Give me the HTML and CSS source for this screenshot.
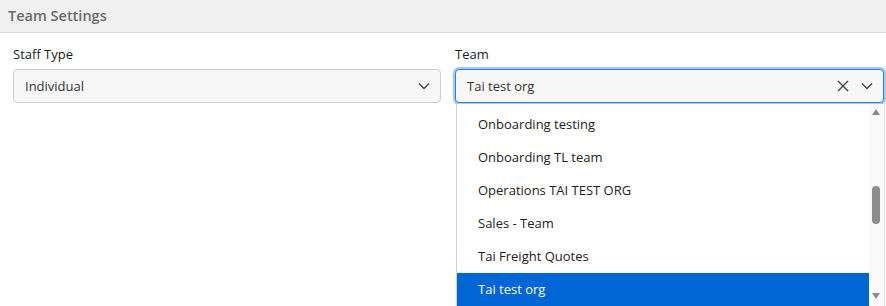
FILE: index.html
```html
<!DOCTYPE html>
<html lang="en">
<head>
    <meta charset="UTF-8">
    <meta name="viewport" content="width=device-width, initial-scale=1.0">
    <title>Team Settings</title>
    <link rel="stylesheet" href="styles.css">
</head>
<body>
    <div class="panel-header">Team Settings</div>
    <div class="form-row">
        <div class="field">
            <label>Staff Type</label>
            <div class="select">
                <span class="select-value">Individual</span>
                <span class="select-icons">
                    <svg class="chevron" width="14" height="14" viewBox="0 0 14 14"><path d="M2 4.5 L7 9.5 L12 4.5" fill="none" stroke="#444" stroke-width="1.4"/></svg>
                </span>
            </div>
        </div>
        <div class="field">
            <label>Team</label>
            <div class="select focused">
                <span class="select-value">Tai test org</span>
                <span class="select-icons">
                    <svg class="clear" width="14" height="14" viewBox="0 0 14 14"><path d="M2 2 L12 12 M12 2 L2 12" fill="none" stroke="#444" stroke-width="1.4"/></svg>
                    <svg class="chevron" width="14" height="14" viewBox="0 0 14 14"><path d="M2 4.5 L7 9.5 L12 4.5" fill="none" stroke="#444" stroke-width="1.4"/></svg>
                </span>
            </div>
            <div class="dropdown">
                <ul class="options">
                    <li>Onboarding testing</li>
                    <li>Onboarding TL team</li>
                    <li>Operations TAI TEST ORG</li>
                    <li>Sales - Team</li>
                    <li>Tai Freight Quotes</li>
                    <li class="selected">Tai test org</li>
                </ul>
                <div class="scrollbar">
                    <span class="arrow-up"></span>
                    <span class="thumb"></span>
                    <span class="arrow-down"></span>
                </div>
            </div>
        </div>
    </div>
</body>
</html>
```

FILE: styles.css
```css
body {
    margin: 0;
    font-family: "Open Sans", "Noto Sans", sans-serif;
    font-size: 13px;
    color: #222;
    background: #fff;
    height: 306px;
    overflow: hidden;
}
.panel-header {
    height: 33px;
    line-height: 32px;
    padding-left: 8px;
    background: #f0f0f0;
    border-bottom: 1px solid #dcdcdc;
    box-sizing: border-box;
    font-size: 14.5px;
    font-weight: 600;
    color: #6b6b6b;
}
.form-row {
    display: grid;
    grid-template-columns: 428px 429px;
    column-gap: 14px;
    padding: 13px 0 0 13px;
}
.field {
    position: relative;
}
.field label {
    display: block;
    height: 23px;
    line-height: 17px;
    color: #222;
}
.select {
    display: flex;
    align-items: center;
    height: 34px;
    box-sizing: border-box;
    border: 1px solid #cfcfcf;
    border-radius: 4px;
    background: #f7f7f7;
    padding: 0 9px 0 11px;
}
.select.focused {
    border-color: #2b7de9;
    box-shadow: 0 0 0 2px #a7c9f5;
}
.select-value {
    flex: 1;
    color: #333;
}
.select-icons {
    display: flex;
    gap: 10px;
}
.select-icons svg {
    display: block;
}
.dropdown {
    position: absolute;
    top: 58px;
    left: 1px;
    right: -1px;
    height: 210px;
    display: flex;
    background: #fff;
    border-left: 1px solid #d0d0d0;
    border-right: 1px solid #e2e2e2;
}
.options {
    list-style: none;
    margin: 0;
    padding: 4px 0 0;
    flex: 1;
}
.options li {
    height: 33px;
    line-height: 33px;
    padding-left: 21px;
}
.options li.selected {
    background: #0066d6;
    color: #fff;
}
.scrollbar {
    position: relative;
    width: 15px;
    background: #f9f9f9;
}
.arrow-up, .arrow-down {
    position: absolute;
    left: 3px;
    width: 0;
    height: 0;
    border-left: 4.5px solid transparent;
    border-right: 4.5px solid transparent;
}
.arrow-up {
    top: 5px;
    border-bottom: 6px solid #8a8a8a;
}
.arrow-down {
    top: 189px;
    border-top: 6px solid #8a8a8a;
}
.thumb {
    position: absolute;
    left: 3px;
    top: 82px;
    width: 8px;
    height: 38px;
    border-radius: 4px;
    background: #8c8c8c;
}
```
